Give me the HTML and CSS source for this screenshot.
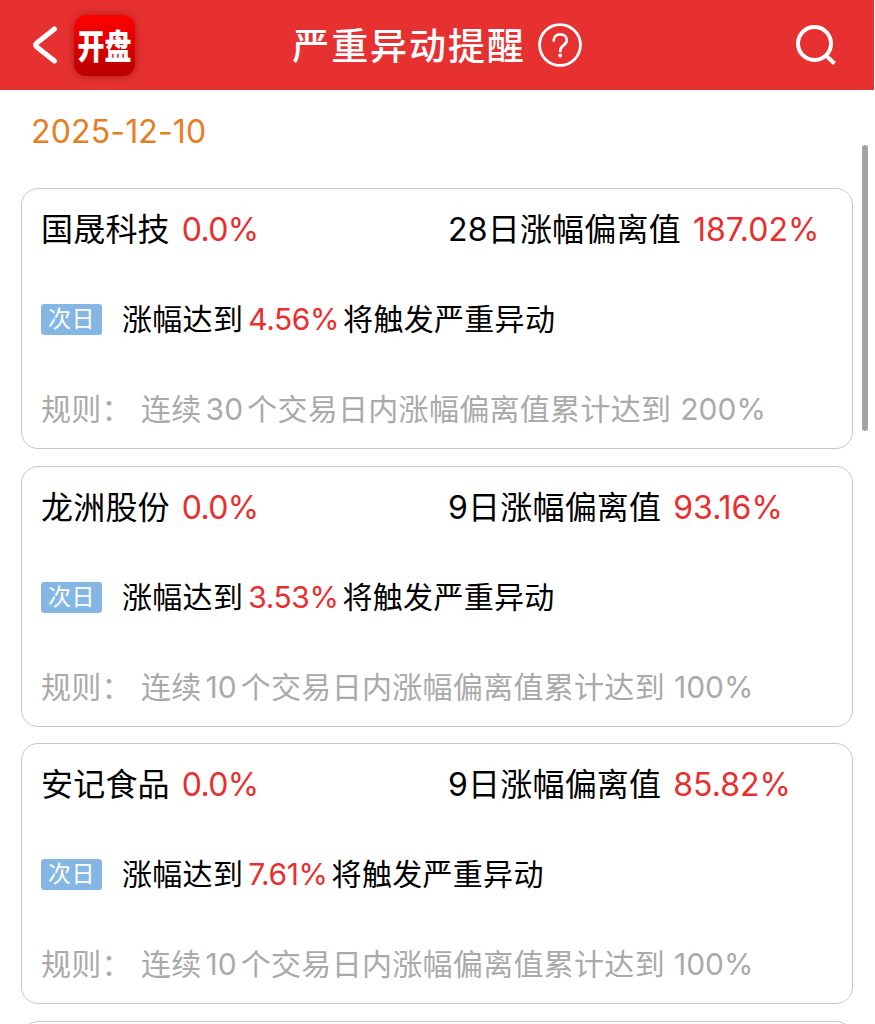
FILE: index.html
```html
<!DOCTYPE html>
<html lang="zh-CN">
<head>
    <meta charset="UTF-8">
    <meta name="viewport" content="width=device-width, initial-scale=1.0">
    <title>严重异动提醒</title>
    <link rel="stylesheet" href="styles.css">
</head>
<body>
    <header class="navbar">
        <div class="nav-left">
            <svg class="back" width="28" height="40" viewBox="0 0 28 40">
                <path d="M23.5 4 L5.5 18.3 Q3.6 20 5.5 21.7 L23.5 36" fill="none" stroke="#fff" stroke-width="5" stroke-linecap="round" stroke-linejoin="round"/>
            </svg>
            <div class="logo"><span>开盘</span></div>
        </div>
        <div class="nav-title">
            <h1>严重异动提醒</h1>
            <svg class="help" width="44" height="44" viewBox="0 0 44 44" fill="none" stroke="#fff">
                <circle cx="22" cy="22" r="20.4" stroke-width="2.8"/>
                <path d="M15.7 17.6 C15.7 13.7 18.5 11.4 22.2 11.4 C26 11.4 28.8 13.9 28.8 17.2 C28.8 20 27 21.3 25 22.8 C22.9 24.4 22.2 25.4 22.2 28.2" stroke-width="2.7" stroke-linecap="round"/>
                <circle cx="22.2" cy="32.5" r="1.9" fill="#fff" stroke="none"/>
            </svg>
        </div>
        <svg class="search" width="42" height="42" viewBox="0 0 42 42" fill="none" stroke="#fff">
            <circle cx="19.5" cy="19.5" r="16.5" stroke-width="4"/>
            <path d="M31 31.5 L39.5 39.5" stroke-width="4"/>
        </svg>
    </header>

    <main class="content">
        <div class="date">2025-12-10</div>
        <div class="list">
            <section class="card">
                <div class="row stock">
                    <div class="name">国晟科技<span class="red">0.0%</span></div>
                    <div class="deviation">28日涨幅偏离值<span class="red">187.02%</span></div>
                </div>
                <div class="row notice">
                    <span class="tag">次日</span>
                    <p>涨幅达到<span class="red">4.56%</span>将触发严重异动</p>
                </div>
                <div class="row rule">
                    <span class="label">规则：</span>
                    <p>连续<span class="days">30</span>个交易日内涨幅偏离值累计达到<span class="limit">200%</span></p>
                </div>
            </section>
            <section class="card">
                <div class="row stock">
                    <div class="name">龙洲股份<span class="red">0.0%</span></div>
                    <div class="deviation">9日涨幅偏离值<span class="red">93.16%</span></div>
                </div>
                <div class="row notice">
                    <span class="tag">次日</span>
                    <p>涨幅达到<span class="red">3.53%</span>将触发严重异动</p>
                </div>
                <div class="row rule">
                    <span class="label">规则：</span>
                    <p>连续<span class="days">10</span>个交易日内涨幅偏离值累计达到<span class="limit">100%</span></p>
                </div>
            </section>
            <section class="card">
                <div class="row stock">
                    <div class="name">安记食品<span class="red">0.0%</span></div>
                    <div class="deviation">9日涨幅偏离值<span class="red">85.82%</span></div>
                </div>
                <div class="row notice">
                    <span class="tag">次日</span>
                    <p>涨幅达到<span class="red">7.61%</span>将触发严重异动</p>
                </div>
                <div class="row rule">
                    <span class="label">规则：</span>
                    <p>连续<span class="days">10</span>个交易日内涨幅偏离值累计达到<span class="limit">100%</span></p>
                </div>
            </section>
            <section class="card"></section>
        </div>
        <div class="scrollbar"></div>
    </main>
</body>
</html>
```

FILE: styles.css
```css
* {
    box-sizing: border-box;
}
body {
    margin: 0;
    background-color: #fff;
    color: #000;
    font-family: Inter, "Noto Sans CJK SC", sans-serif;
}
h1, p {
    margin: 0;
}
.navbar {
    display: grid;
    grid-template-columns: 1fr auto 1fr;
    align-items: center;
    width: 874px;
    height: 90px;
    padding: 0 37px 0 31px;
    background-color: #e73131;
}
.nav-left {
    display: flex;
    align-items: center;
    gap: 15px;
}
.logo {
    display: flex;
    justify-content: center;
    align-items: center;
    width: 61px;
    height: 61px;
    border-radius: 12px;
    background: linear-gradient(#ff0000, #b80000);
    box-shadow: 0 0 8px rgba(120, 0, 0, 0.45);
    color: #fff;
}
.logo span {
    font-family: "Noto Sans CJK SC", sans-serif;
    font-size: 27px;
    font-weight: 900;
    line-height: 34px;
    transform: scaleY(1.28);
}
.nav-title {
    display: flex;
    align-items: center;
    gap: 12px;
    padding-left: 6px;
}
.nav-title h1 {
    padding-top: 4px;
    font-size: 37px;
    font-weight: 500;
    line-height: 50px;
    letter-spacing: 1.9px;
    color: #fff;
}
.search {
    justify-self: end;
}
.content {
    position: relative;
    height: calc(100vh - 90px);
    overflow: hidden;
}
.date {
    height: 98px;
    padding-left: 31px;
    font-size: 32px;
    line-height: 83px;
    letter-spacing: 0.15px;
    color: #e67e22;
}
.list {
    display: flex;
    flex-direction: column;
    gap: 16.7px;
    padding: 0 21px;
}
.card {
    display: grid;
    grid-template-rows: 82px 97px 80px;
    flex-shrink: 0;
    width: 832px;
    height: 261px;
    padding: 0 19px;
    border: 1px solid #c8c8c8;
    border-radius: 17px;
}
.row {
    display: flex;
    align-items: center;
    white-space: nowrap;
}
.red {
    color: #ea2e2e;
}
.stock {
    padding-bottom: 6px;
    font-size: 32px;
    letter-spacing: 0.2px;
}
.name {
    width: 407px;
}
.stock .red {
    margin-left: 12px;
    letter-spacing: 0;
}
.name .red {
    letter-spacing: -0.7px;
}
.notice {
    font-size: 30px;
    letter-spacing: 0.3px;
}
.notice p {
    padding-bottom: 5px;
}
.notice .red {
    margin: 0 4px 0 5px;
    letter-spacing: -0.4px;
}
.tag {
    width: 61px;
    height: 31px;
    margin-right: 20px;
    border-radius: 3px;
    background-color: #85b7e5;
    color: #fff;
    font-size: 23px;
    line-height: 30px;
    letter-spacing: 0.5px;
    text-align: center;
}
.rule {
    padding-bottom: 2px;
    font-size: 30px;
    letter-spacing: 0.3px;
    color: #aaa;
}
.label {
    width: 100px;
}
.days {
    margin: 0 4px;
    letter-spacing: 0;
}
.limit {
    margin-left: 9px;
    letter-spacing: 0;
}
.scrollbar {
    position: absolute;
    top: 55px;
    right: 7px;
    width: 6px;
    height: 286px;
    border-radius: 3px;
    background-color: #a3a3a3;
}
```
